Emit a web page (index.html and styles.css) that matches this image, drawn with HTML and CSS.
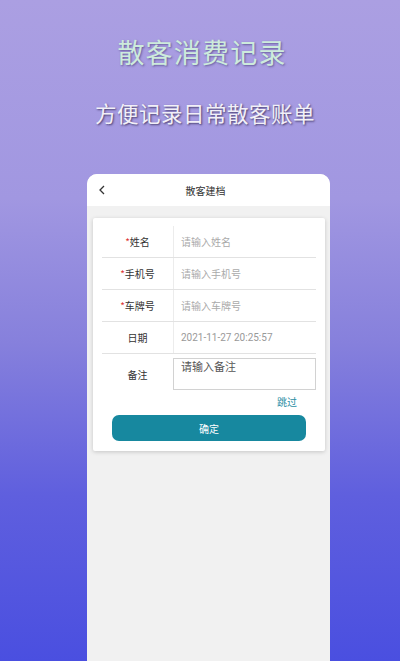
FILE: index.html
```html
<!DOCTYPE html>
<html lang="zh">
<head>
<meta charset="utf-8">
<link rel="stylesheet" href="styles.css">
</head>
<body>
<div class="page">
  <header class="hero">
    <h1 class="title">散客消费记录</h1>
    <p class="subtitle">方便记录日常散客账单</p>
  </header>
  <div class="phone">
    <div class="topbar">
      <svg class="back" width="8" height="10" viewBox="0 0 8 10"><path d="M6 1 L2 5 L6 9" fill="none" stroke="#333" stroke-width="1.3"/></svg>
      <span class="topbar-title">散客建档</span>
    </div>
    <div class="content">
      <div class="card">
        <div class="row">
          <div class="label"><span class="req">*</span>姓名</div>
          <div class="value placeholder">请输入姓名</div>
        </div>
        <div class="row">
          <div class="label"><span class="req">*</span>手机号</div>
          <div class="value placeholder">请输入手机号</div>
        </div>
        <div class="row">
          <div class="label"><span class="req">*</span>车牌号</div>
          <div class="value placeholder">请输入车牌号</div>
        </div>
        <div class="row">
          <div class="label">日期</div>
          <div class="value date">2021-11-27 20:25:57</div>
        </div>
        <div class="row remark">
          <div class="label">备注</div>
          <div class="textarea">请输入备注</div>
        </div>
        <div class="skip-line"><span class="skip">跳过</span></div>
        <div class="btn">确定</div>
      </div>
    </div>
  </div>
</div>
</body>
</html>
```
FILE: styles.css
```css
html, body {
  margin: 0;
  padding: 0;
}
body {
  width: 400px;
  height: 661px;
  overflow: hidden;
  font-family: "Noto Sans CJK SC", "Noto Sans", sans-serif;
  background: linear-gradient(180deg, #ab9fe2 0%, #a197e1 30%, #8680dc 52%, #5f5fde 75%, #4a4fe0 100%);
}
.page {
  display: flex;
  flex-direction: column;
  align-items: center;
  height: 661px;
}
.hero {
  display: flex;
  flex-direction: column;
  align-items: center;
  padding-top: 33px;
  height: 141px;
  box-sizing: border-box;
  width: 100%;
}
.title {
  margin: 0 0 0 4px;
  font-size: 27px;
  line-height: 37px;
  font-weight: 400;
  color: #cdebdc;
  letter-spacing: 1.2px;
  text-shadow: 1px 1px 2px rgba(40, 30, 90, 0.5);
}
.subtitle {
  margin: 28px 0 0 10px;
  font-size: 21.5px;
  line-height: 30px;
  font-weight: 400;
  color: #f2f0f8;
  letter-spacing: 0.5px;
  text-shadow: 1px 1px 2px rgba(30, 20, 60, 0.7);
}
.phone {
  margin-top: 33px;
  margin-left: 17px;
  width: 243px;
  flex: 1;
  background: #f1f1f1;
  border-radius: 10px 10px 0 0;
  overflow: hidden;
  display: flex;
  flex-direction: column;
}
.topbar {
  height: 32px;
  background: #fff;
  display: flex;
  align-items: center;
  justify-content: center;
  position: relative;
}
.back {
  position: absolute;
  left: 11px;
  top: 11px;
}
.topbar-title {
  font-size: 10px;
  color: #333;
  margin-right: 6px;
}
.content {
  padding: 12px 5px 0 6px;
}
.card {
  background: #fff;
  border-radius: 2px;
  box-shadow: 0 1px 4px rgba(0, 0, 0, 0.18);
  padding: 8px 9px 10px 9px;
  display: flex;
  flex-direction: column;
}
.row {
  display: flex;
  height: 32px;
  border-bottom: 1px solid #e2e2e2;
  box-sizing: border-box;
}
.label {
  width: 71px;
  border-right: 1px solid #ececec;
  display: flex;
  align-items: center;
  justify-content: center;
  font-size: 10px;
  color: #333;
}
.req {
  color: #d33;
}
.value {
  display: flex;
  align-items: center;
  padding-left: 7px;
  font-size: 10px;
}
.placeholder {
  color: #aaa;
}
.date {
  color: #999;
  font-family: "Roboto", "Noto Sans", sans-serif;
}
.row.remark {
  height: auto;
  border-bottom: none;
  padding-top: 4px;
  align-items: flex-start;
}
.row.remark .label {
  border-right: none;
  height: 32px;
}
.textarea {
  flex: 1;
  height: 32px;
  border: 1px solid #d2d2d2;
  box-sizing: border-box;
  font-size: 11px;
  color: #555;
  padding: 0 0 0 7px;
  line-height: 15px;
}
.skip-line {
  display: flex;
  justify-content: flex-end;
  padding-right: 19px;
  margin-top: 1px;
  height: 20px;
  align-items: center;
}
.skip {
  font-size: 10px;
  color: #2b8ea3;
}
.btn {
  margin: 4px 10px 0 10px;
  height: 26px;
  border-radius: 7px;
  background: #17889f;
  color: #fff;
  font-size: 10px;
  display: flex;
  align-items: center;
  justify-content: center;
}
```
